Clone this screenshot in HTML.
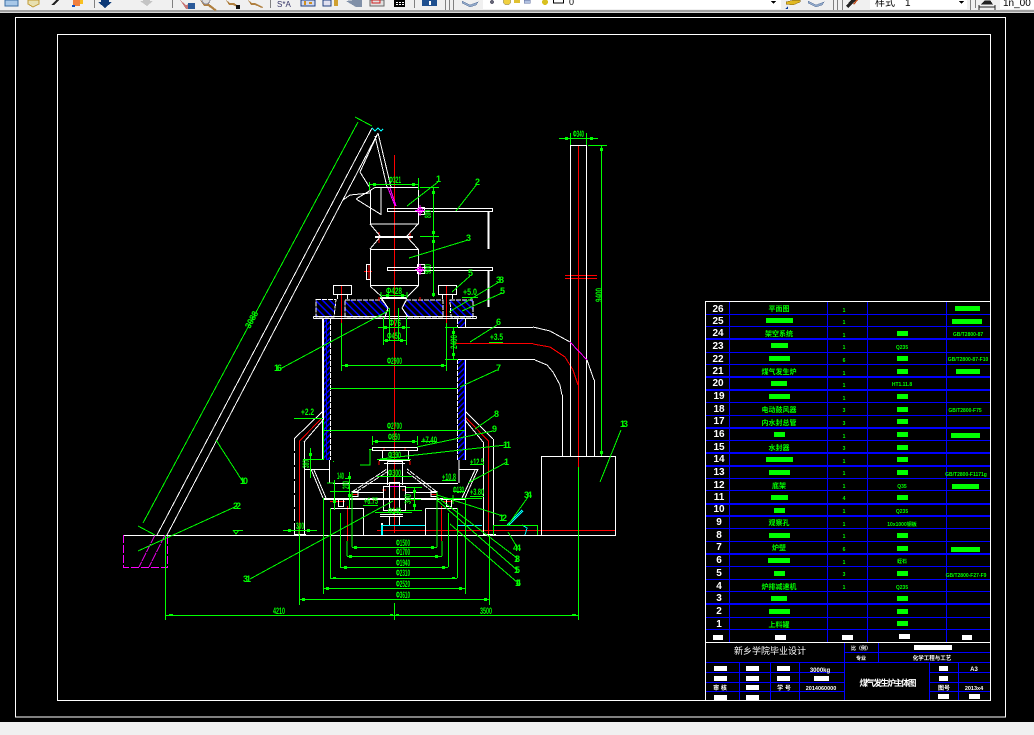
<!DOCTYPE html>
<html><head><meta charset="utf-8"><style>
html,body{margin:0;padding:0;background:#000;width:1034px;height:735px;overflow:hidden}
svg{display:block}
path,rect,circle,line{shape-rendering:crispEdges}
.d{font:bold 9px "Liberation Sans","Noto Sans CJK SC",sans-serif;fill:#0f0}
.g{font:bold 7px "Liberation Sans","Noto Sans CJK SC",sans-serif;fill:#0f0;text-anchor:middle}
.s{font:bold 5px "Liberation Sans","Noto Sans CJK SC",sans-serif;fill:#0f0;text-anchor:middle}
.n{font:bold 10px "Liberation Sans",sans-serif;fill:#fff;text-anchor:middle}
.w{font:bold 7px "Liberation Sans","Noto Sans CJK SC",sans-serif;fill:#fff;text-anchor:middle}
</style></head><body>
<svg width="1034" height="735" viewBox="0 0 1034 735" xmlns="http://www.w3.org/2000/svg">
<defs>
<pattern id="h" width="5" height="5" patternUnits="userSpaceOnUse" patternTransform="rotate(-45)"><rect width="5" height="5" fill="#000"/><rect width="1.6" height="5" fill="#00f"/></pattern>
<pattern id="h2" width="4" height="4" patternUnits="userSpaceOnUse" patternTransform="rotate(45)"><rect width="4" height="4" fill="#000"/><rect width="1.6" height="4" fill="#00f"/></pattern>
</defs>
<rect width="1034" height="735" fill="#000"/>

<!-- toolbar -->
<rect x="0" y="0" width="1034" height="10" fill="#f0f0f0"/>
<rect x="0" y="10" width="1034" height="2" fill="#a0a0a0"/>
<rect x="0" y="12" width="1034" height="1" fill="#d8d8d8"/>
<g fill="#808080">
<rect x="94" y="0" width="1" height="8"/><rect x="172" y="0" width="1" height="8"/><rect x="270" y="0" width="1" height="8"/><rect x="414" y="0" width="1" height="8"/><rect x="445" y="0" width="1" height="10"/><rect x="449" y="0" width="1" height="10"/><rect x="453" y="0" width="1" height="10"/>
<rect x="833" y="0" width="1" height="10"/><rect x="837" y="0" width="1" height="10"/><rect x="842" y="0" width="1" height="10"/><rect x="970" y="0" width="1" height="10"/><rect x="975" y="0" width="1" height="8"/>
</g>
<rect x="5" y="0" width="13" height="6" fill="#a8c8e8" stroke="#3a6ea5"/>
<path d="M28 0v4l5 3 6-3V0z" fill="#e8e0b0" stroke="#c09830"/>
<path d="M51 5l5-5h3l-5 5z" fill="#222"/>
<rect x="73" y="0" width="7" height="6" fill="#f08040"/><rect x="72" y="5" width="3" height="2" fill="#1050c0"/><rect x="80" y="0" width="3" height="4" fill="#f8c020"/>
<path d="M101 0h8v2h3l-7 6-7-6h3z" fill="#0d3a78"/>
<path d="M143 0h7v1h3l-6 5-7-5h3z" fill="#c4c4c4"/>
<path d="M180 0l6 5 3-1 5 3-3 2h-5z" fill="#c87878"/><rect x="188" y="3" width="7" height="6" fill="#2a5a9a"/>
<path d="M200 0l4 3h4l9 7-2 1-7-5h-4z" fill="#b08040"/><circle cx="206" cy="0" r="4" fill="#ddd" stroke="#889"/>
<path d="M226 0l4 3h4l6 4-1 1-6-3h-4z" fill="#b08040"/><rect x="236" y="5" width="4" height="4" fill="#111"/>
<path d="M248 0l4 3h3l8 4-1 1-7-3h-4z" fill="#b08040"/>
<text x="277" y="7" font-family="Liberation Sans" font-size="8" fill="#336">S*A</text>
<rect x="301" y="0" width="14" height="6" fill="#d0d8f0" stroke="#204080"/><rect x="304" y="1" width="2" height="4" fill="#d09020"/><rect x="309" y="2" width="3" height="2" fill="#d09020"/>
<rect x="323" y="0" width="8" height="6" fill="#e0e0f0" stroke="#204080"/><rect x="334" y="0" width="4" height="6" fill="#d0a030"/>
<path d="M346 1l8-1h8v7h-6z" fill="#8090a8"/>
<rect x="370" y="0" width="14" height="6" fill="#e0e0e0" stroke="#666"/><rect x="372" y="0" width="8" height="3" fill="none" stroke="#d02020"/>
<rect x="394" y="0" width="11" height="7" fill="#000"/><g fill="#fff"><rect x="396" y="2" width="2" height="1"/><rect x="399" y="2" width="2" height="1"/><rect x="402" y="2" width="2" height="1"/><rect x="396" y="4" width="2" height="1"/><rect x="399" y="4" width="2" height="1"/><rect x="402" y="4" width="2" height="1"/></g>
<rect x="422" y="0" width="15" height="6" fill="#1e4f8f"/><rect x="429" y="1" width="2" height="4" fill="#fff"/>
<path d="M462 1l8 4 8-3-2 3-6 2-8-4z" fill="#90a8c8" stroke="#6078a0" stroke-width=".5"/>
<rect x="483" y="0" width="298" height="9" fill="#fff"/>
<circle cx="492" cy="2" r="2" fill="#667"/><circle cx="507" cy="1" r="4" fill="#f0d040" stroke="#888" stroke-width=".5"/>
<rect x="514" y="0" width="6" height="3" fill="#e0c030"/><rect x="524" y="0" width="6" height="3" fill="#b0c0e0" stroke="#6070a0" stroke-width=".5"/>
<circle cx="545" cy="2" r="3" fill="#d8c020"/><rect x="553.500" y="-1" width="10" height="4" fill="#fff" stroke="#000"/>
<text x="569" y="5" font-family="Liberation Sans" font-size="9" fill="#000">0</text>
<path d="M771 1h5l-2.500 3z" fill="#000"/>
<path d="M786 2l8-2h6v2l-7 3-7-1z" fill="#e0b820" stroke="#806010" stroke-width=".5"/><path d="M785 9l3-3v3z" fill="#1040a0"/>
<path d="M808 1l8 4 8-3-2 3-6 2-8-4z" fill="#90a8c8" stroke="#6078a0" stroke-width=".5"/>
<path d="M851 0l-5 6 2 2 6-6 3-2z" fill="#222"/><path d="M856 0l-3 4 1 1 4-5z" fill="#c05020"/>
<rect x="870" y="0" width="97" height="9" fill="#fff"/>
<text x="875" y="6" font-family="Liberation Sans,Noto Sans CJK SC,sans-serif" font-size="10" fill="#000">样式</text>
<text x="905" y="6" font-family="Liberation Sans" font-size="10" fill="#000">1</text>
<path d="M959 1h5l-2.500 3z" fill="#000"/>
<path d="M979 7h16M979 5v5M995 5v5M982 4l3-3h5l2 3z" stroke="#222" fill="#222" stroke-width="1"/>
<rect x="1000" y="0" width="34" height="9" fill="#fff"/>
<text x="1003" y="6" font-family="Liberation Sans" font-size="10" fill="#000">1n_00</text>

<rect x="0" y="722" width="1034" height="13" fill="#f0f0f0"/>

<!-- frames -->
<g fill="none" stroke="#fff">
<rect x="15.500" y="17.500" width="990" height="699.500"/>
<rect x="57.500" y="34.500" width="933" height="666"/>
</g>

<!-- hatch areas -->
<g stroke="#fff" stroke-width="1" stroke-dasharray="5 1" fill="url(#h)">
<path d="M316 299.500H336L334 317H316Z"/>
<path d="M345 300H382L388 308L385 317H345Z"/>
<path d="M406 300H443V317H408L402 308Z"/>
<path d="M450 300H473V317H451Z"/>
</g>
<g>
<rect x="324" y="319" width="6" height="141" fill="url(#h2)"/>
<rect x="458" y="359" width="7" height="101" fill="url(#h2)"/>
<rect x="458" y="319" width="7" height="8" fill="url(#h2)"/>
<rect x="326" y="319" width="1" height="141" fill="#00f"/><rect x="464" y="359" width="1" height="101" fill="#00f"/>
</g>

<!-- red lines -->
<g fill="none" stroke="#f00" stroke-width="1">
<path d="M394.500 155V533"/>
<path d="M341.500 285V323M446.500 285V323"/>
<path d="M377 530.500H616"/>
<path d="M578.500 145V467"/>
<path d="M565 275.500H597M565 278.500H597"/>
<path d="M455 343.500H533"/>
<path d="M533 344L550 347L565 357L573 370L578 385"/>
<path d="M299.500 535V441L322 418"/>
<path d="M488.500 535V441L466 418"/>
<path d="M347.500 506V541M441.500 506V541"/>
<path d="M330 501.500H345M443 501.500H453M352 494.500H358M431 494.500H437"/>
<path d="M379 461V465M410 461V465M384 447V451M405 447V451"/>
<path d="M411 500H415M376 500H372"/>
<path d="M369 264V279M364 271.500H372"/>
<path d="M379 232V241M410 232V241M379 243V240"/>
<path d="M379 297V301M420 297V301M382 490h4M402 490h4"/>
</g>

<!-- white drawing -->
<g fill="none" stroke="#fff" stroke-width="1">
<path d="M372 128L157 535M378 133L167 535"/>
<path d="M378 133L391 187M375 136L387 187"/>
<path d="M378 133L360 172L370 188M343 200L350 195L370 193"/>
<path d="M356 199L375 187.500H418.500V224H370.500V190"/>
<path d="M356 199L381 214.500V187.500"/>
<path d="M370.500 224.500V190"/>
<path d="M370 224L380 236M418 224L407 236"/>
<path d="M375 236.500H413M375 237.500H413"/>
<path d="M380 237L370 249M407 237L418 249"/>
<path d="M370.500 249.500H418.500V285.500H370.500Z"/>
<path d="M370 286L382 297M418 286L407 297"/>
<path d="M380 297.500H407M380 298.500H407"/>
<path d="M382 299L388 308L385 317M407 299L402 308L408 317"/>
<path d="M387.500 208.500H492.500V211.500H387.500Z M387.500 267.500H492.500V270.500H387.500Z"/>
<path d="M488 212V249M489 212V249M488 271V307M489 271V307"/>
<path d="M418.500 207.500H424.500V214.500H418.500Z M417.500 264.500H424.500V273.500H417.500Z M366.500 264.500H370.500V279.500H366.500Z"/>
<path d="M333.500 285.500H351.500V294.500H333.500Z M438.500 285.500H456.500V294.500H438.500Z M337.500 295V299M347.500 295V299M442.500 295V299M452.500 295V299"/>
<path d="M313.500 316.500H476.500M313.500 318.500H476.500M313.500 316.500V318.500M476.500 316.500V318.500"/>
<path d="M323.500 319V460M322.500 319V460"/>
<path d="M330.500 319V460" stroke-dasharray="5 1"/>
<path d="M457.500 319V327M457.500 359V460" stroke-dasharray="5 1"/>
<path d="M465.500 359V460M465.500 319V327"/>
<path d="M457 327.500H533M457 359.500H535"/>
<path d="M533 327L550 331L570 342"/>
<path d="M535 360L547 365L553 372L560 385L562 395"/>
<path d="M587 360L594 380"/>
<path d="M594.500 380V456M562.500 395V456"/>
<path d="M570.500 145.500H586.500M570.500 145V456M586.500 145V456"/>
<path d="M541.500 456.500H615.500V535.500H541.500Z"/>
<path d="M123 535.500H616"/>
<path d="M294.500 535V439" stroke-dasharray="12 2"/>
<path d="M294 439L322 412M304 442L323 420"/>
<path d="M304.500 442V535"/>
<path d="M493.500 535V439"/>
<path d="M493 439L466 412M483 442L465 420"/>
<path d="M483.500 442V535"/>
<path d="M304 469.500H329M329.500 460V483M459 460V483M459 469.500H478.500M333 483.500H458"/>
<path d="M311 469L323 498M314 470L326 498M478 469L465 498M475 470L462 498"/>
<path d="M323 498.500H465M323 499.500H465"/>
<path d="M352 492L387 469M437 492L407 469M356 492L387 472M433 492L407 472" stroke-dasharray="6 1"/>
<path d="M352 492.500H383M405 492.500H437"/>
<path d="M387.500 461.500H402.500V485M387.500 461.500V485"/>
<path d="M383.500 486.500H405.500V510.500H383.500Z M389.500 482.500H399.500V509.500H389.500Z"/>
<path d="M380 516.500H403M380 514.500H403M389.500 517V525.500H399.500V517"/>
<path d="M372.500 447.500H417.500V450.500H372.500Z"/>
<path d="M382.500 450V460M408.500 450V460M379 460.500H410M384 463.500H405"/>
<path d="M330.500 508.500H363.500V535M330.500 508.500V535M425.500 508.500H457.500V535M425.500 508.500V535"/>
<path d="M338.500 498V506.500H343.500V498M446.500 498V506.500H451.500V498"/>
<path d="M352 491.500H358V496.500H352ZM431 491.500H437V496.500H431Z"/>
<path d="M294 534.500H306M484 534.500H496"/>
</g>
<rect x="381" y="523" width="2" height="12" fill="#0ff"/><rect x="381" y="523" width="2" height="2" fill="#fff"/>
<g fill="none" stroke="#0ff" stroke-width="1">
<path d="M382 525.500H425M457 525.500H482M493 525.500H522"/>
<path d="M522 525L527 528L525 535"/>
<path d="M372 128L375 131L378 128L381 131L383 129"/>
<path d="M507 525L522 510M509 525L523 511"/>
</g>
<g fill="none" stroke="#f0f" stroke-width="1">
<path d="M388 188L395 206M390 188L396 206"/>
<path d="M570 342L587 360"/>
<path d="M123.500 535V567.500H167.500V535" stroke-dasharray="8 2"/>
<path d="M155 535L139 567M165 535L149 567" stroke-dasharray="9 1"/>
<path d="M390 486.500H399"/>
<circle cx="420" cy="210.500" r="2.500"/><circle cx="420" cy="269.500" r="2.500"/>
<path d="M415 210.500H425M415 269.500H425M420 205V216M420 264V275"/>
</g>

<!-- green drawing -->
<g fill="none" stroke="#0f0" stroke-width="1">
<path d="M355 117L372 126"/>
<path d="M358 122L143 523"/>
<path d="M138 526L155 535"/>
<path d="M369.500 182V190M418.500 178V190M370 184.500H418"/>
<path d="M420 187.500H439M420 236.500H439M433.500 187V297"/>
<path d="M381 292V298M407 292V298M382 295.500H406"/>
<path d="M407 206L438 182M456 211L477 184M409 258L468 240M452 292L470 276M449 312L499 282M462 311L502 293M470 342L497 325M460 387L497 370M475 429L495 415M417 447L493 431M380 459L506 445M468 483L507 462M437 495L503 516M437 497L517 558M437 500L517 570M450 524L518 583M508 525L528 497M508 532L517 547"/>
<path d="M138 551L237 506M216 440L243 482M250 579L393 501M280 369L390 310M621 430L600 482"/>
<path d="M378 327.500H410M383 340.500H406M383.500 317V345M406.500 317V345M389.500 308V340M398.500 308V340"/>
<path d="M341.500 323V371M446.500 323V371M341 365.500H446"/>
<path d="M330 388.500H457M323 430.500H465"/>
<path d="M372.500 436V445M417.500 436V445M372 441.500H417"/>
<path d="M445 327.500H458M445 359.500H458M453.500 327V359"/>
<path d="M294 418.500H323M323.500 420V460"/>
<path d="M283 530.500H317M299 526V535"/>
<path d="M310.500 448V478M303 459.500H323M334.500 480V510M333 461.500H334M327 483H334M349.500 472V508M330 491.500H350M345 478.500H350"/>
<path d="M414.500 487V510M406 487.500H422M406 510.500H422M410 499.500H421"/>
<path d="M370 450V465H360M369 449.500H372M370 465V449"/>
<path d="M377 476.500H412M377 459.500H411M375 512.500H412"/>
<path d="M443 498.500H482M453 495V504M453 491.500H465"/>
<path d="M352 492V547M437 492V547M352 547.500H437"/>
<path d="M347 541V556M442 541V556M347 556.500H442"/>
<path d="M340.500 513V567M448.500 513V567M340 567.500H448"/>
<path d="M330.500 508V578M457.500 508V578M330 578.500H457"/>
<path d="M323.500 498V594M465.500 498V594M323 588.500H465"/>
<path d="M299.500 535V605M489.500 535V605M299 599.500H489"/>
<path d="M165.500 535V620M578.500 467V620M165 615.500H578M394.500 603V620"/>
<path d="M493.500 525.500H537.500V535M537.500 525V535M493.500 525V535"/>
<path d="M559 138.500H598M570.500 133V145M586.500 133V145"/>
<path d="M588 145.500H607M601.500 145V456"/>
<path d="M233 530.500H243M233 530L236 534L239 530"/>
<path d="M462 297.500H478"/>
<path d="M489 342.500H503"/>
<path d="M421 441.500H437"/>
<path d="M470 464.500H484M442 480.500H456M470 496.500H484M363 505.500H378"/>
</g>
<g fill="#0f0">
<rect x="373" y="183" width="3" height="3"/><rect x="412" y="183" width="3" height="3"/>
<rect x="432" y="191" width="3" height="3"/><rect x="432" y="231" width="3" height="3"/><rect x="432" y="240" width="3" height="3"/><rect x="432" y="293" width="3" height="3"/>
<rect x="386" y="294" width="3" height="3"/><rect x="401" y="294" width="3" height="3"/>
<rect x="384" y="326" width="3" height="3"/><rect x="402" y="326" width="3" height="3"/><rect x="385" y="339" width="3" height="3"/><rect x="400" y="339" width="3" height="3"/>
<rect x="345" y="364" width="3" height="3"/><rect x="441" y="364" width="3" height="3"/><rect x="452" y="331" width="3" height="3"/><rect x="452" y="353" width="3" height="3"/>
<rect x="375" y="440" width="3" height="3"/><rect x="412" y="440" width="3" height="3"/>
<rect x="309" y="453" width="3" height="3"/><rect x="348" y="476" width="3" height="3"/><rect x="333" y="500" width="3" height="3"/><rect x="348" y="494" width="3" height="3"/><rect x="413" y="490" width="3" height="3"/><rect x="413" y="504" width="3" height="3"/>
<rect x="354" y="546" width="3" height="3"/><rect x="431" y="546" width="3" height="3"/><rect x="349" y="555" width="3" height="3"/><rect x="435" y="555" width="3" height="3"/><rect x="344" y="566" width="3" height="3"/><rect x="442" y="566" width="3" height="3"/><rect x="333" y="577" width="3" height="1"/><rect x="452" y="577" width="3" height="1"/><rect x="326" y="587" width="3" height="3"/><rect x="459" y="587" width="3" height="3"/><rect x="302" y="598" width="3" height="3"/><rect x="484" y="598" width="3" height="3"/>
<rect x="169" y="614" width="4" height="1"/><rect x="572" y="614" width="4" height="1"/><rect x="390" y="614" width="3" height="1"/><rect x="396" y="614" width="3" height="1"/>
<rect x="565" y="137" width="3" height="3"/><rect x="590" y="137" width="3" height="3"/><rect x="600" y="148" width="3" height="3"/><rect x="600" y="451" width="3" height="3"/>
<rect x="288" y="529" width="3" height="3"/><rect x="307" y="529" width="3" height="3"/>
</g>
<g class="d">
<text transform="translate(250 329) rotate(-62)" textLength="18" lengthAdjust="spacingAndGlyphs">3088</text>
<text x="389" y="183" textLength="12" lengthAdjust="spacingAndGlyphs">Φ321</text>
<text x="386" y="294" textLength="16" lengthAdjust="spacingAndGlyphs">Φ428</text>
<text x="389" y="326" textLength="12" lengthAdjust="spacingAndGlyphs">Φ76</text>
<text x="387" y="339" textLength="14" lengthAdjust="spacingAndGlyphs">Φ450</text>
<text x="387" y="364" textLength="15" lengthAdjust="spacingAndGlyphs">Φ2900</text>
<text x="387" y="429" textLength="15" lengthAdjust="spacingAndGlyphs">Φ2700</text>
<text x="388" y="440" textLength="12" lengthAdjust="spacingAndGlyphs">Φ850</text>
<text x="388" y="458" textLength="13" lengthAdjust="spacingAndGlyphs">Φ390</text>
<text x="388" y="476" textLength="13" lengthAdjust="spacingAndGlyphs">Φ300</text>
<text x="388" y="514" textLength="13" lengthAdjust="spacingAndGlyphs">Φ140</text>
<text x="396" y="546" textLength="14" lengthAdjust="spacingAndGlyphs">Φ1500</text>
<text x="396" y="555" textLength="14" lengthAdjust="spacingAndGlyphs">Φ1700</text>
<text x="396" y="566" textLength="14" lengthAdjust="spacingAndGlyphs">Φ1940</text>
<text x="396" y="576" textLength="14" lengthAdjust="spacingAndGlyphs">Φ2310</text>
<text x="396" y="587" textLength="14" lengthAdjust="spacingAndGlyphs">Φ2520</text>
<text x="396" y="598" textLength="14" lengthAdjust="spacingAndGlyphs">Φ3610</text>
<text x="273" y="614" textLength="12" lengthAdjust="spacingAndGlyphs">4210</text>
<text x="480" y="614" textLength="12" lengthAdjust="spacingAndGlyphs">3500</text>
<text x="296" y="529" textLength="8" lengthAdjust="spacingAndGlyphs">300</text>
<text x="337" y="479" textLength="7" lengthAdjust="spacingAndGlyphs">140</text>
<text x="573" y="137" textLength="11" lengthAdjust="spacingAndGlyphs">Φ340</text>
<text x="463" y="295" textLength="14" lengthAdjust="spacingAndGlyphs">+5.0</text>
<text x="490" y="340" textLength="13" lengthAdjust="spacingAndGlyphs">+3.5</text>
<text x="301" y="415" textLength="13" lengthAdjust="spacingAndGlyphs">+2.2</text>
<text x="422" y="443" textLength="15" lengthAdjust="spacingAndGlyphs">+7.40</text>
<text x="470" y="465" textLength="14" lengthAdjust="spacingAndGlyphs">+12.5</text>
<text x="442" y="480" textLength="14" lengthAdjust="spacingAndGlyphs">+10.8</text>
<text x="470" y="495" textLength="14" lengthAdjust="spacingAndGlyphs">+3.80</text>
<text x="364" y="504" textLength="14" lengthAdjust="spacingAndGlyphs">+6.75</text>
<text x="453" y="493" textLength="11" lengthAdjust="spacingAndGlyphs">Φ130</text>
<text transform="translate(457 349) rotate(-90)" textLength="14" lengthAdjust="spacingAndGlyphs">2400</text>
<text transform="translate(431 218) rotate(-90)" textLength="8" lengthAdjust="spacingAndGlyphs">800</text>
<text transform="translate(431 274) rotate(-90)" textLength="10" lengthAdjust="spacingAndGlyphs">900</text>
<text transform="translate(309 468) rotate(-90)" textLength="8" lengthAdjust="spacingAndGlyphs">380</text>
<text transform="translate(349 489) rotate(-90)" textLength="8" lengthAdjust="spacingAndGlyphs">200</text>
<text transform="translate(411 504) rotate(-90)" textLength="10" lengthAdjust="spacingAndGlyphs">300</text>
<text transform="translate(602 302) rotate(-90)" textLength="14" lengthAdjust="spacingAndGlyphs">9400</text>
<text x="436" y="182">1</text><text x="475" y="185">2</text><text x="466" y="241">3</text><text x="468" y="276">5</text>
<text x="496" y="283" textLength="8">38</text><text x="500" y="294">5</text><text x="496" y="325">6</text><text x="496" y="371">7</text>
<text x="494" y="417">8</text><text x="492" y="432">9</text><text x="503" y="448" textLength="8">11</text><text x="504" y="465" textLength="6">1</text>
<text x="499" y="521" textLength="8">12</text><text x="514" y="562" textLength="6">18</text><text x="514" y="573" textLength="6">15</text>
<text x="515" y="586" textLength="6">14</text><text x="524" y="498" textLength="8">34</text><text x="513" y="551" textLength="8">44</text>
<text x="240" y="484" textLength="8">10</text><text x="233" y="509" textLength="8">22</text><text x="243" y="582" textLength="8">31</text>
<text x="274" y="371" textLength="8">16</text><text x="620" y="427" textLength="8">13</text>
</g>

<!-- table -->
<g fill="none" stroke="#00f">
<path d="M705 314.500H990M705 326.500H990M705 352.500H990M705 364.500H990M705 402.500H990M705 415.500H990M705 440.500H990M705 478.500H990M705 490.500H990M705 528.500H990M705 541.500H990M705 566.500H990M705 579.500H990M705 591.500H990M705 617.500H990M705 629.500H990"/>
<path stroke-width="2" d="M705 339H990M705 377H990M705 390H990M705 428H990M705 453H990M705 466H990M705 504H990M705 516H990M705 554H990M705 604H990"/>
<path d="M729.500 301V642M827.500 301V642M867.500 301V642M946.500 301V642"/>
<path d="M844.500 652.500H990M705 662.500H990M878.500 642V662"/>
<path d="M705 672.500H844M705 682.500H844M705 691.500H844M929 672.500H990M929 682.500H990M929 691.500H990"/>
<path d="M739.500 662V700M770.500 662V700M799.500 662V700M844.500 642V700M929.500 662V700M958.500 662V700"/>
</g>
<g stroke="#fff" fill="none">
<path d="M705.500 301.500H990.500M705.500 301V642M705 642.500H990M705.500 642V700"/>
</g>

<g class="n">
<text x="718" y="312">26</text><text x="718" y="324">25</text><text x="718" y="336">24</text><text x="718" y="349">23</text><text x="718" y="362">22</text><text x="718" y="374">21</text><text x="718" y="386">20</text><text x="719" y="399">19</text><text x="719" y="412">18</text><text x="719" y="424">17</text><text x="719" y="437">16</text><text x="719" y="450">15</text><text x="719" y="462">14</text><text x="719" y="475">13</text><text x="719" y="488">12</text><text x="719" y="500">11</text><text x="719" y="512">10</text>
<text x="719" y="525">9</text><text x="719" y="538">8</text><text x="719" y="550">7</text><text x="719" y="563">6</text><text x="719" y="576">5</text><text x="719" y="589">4</text><text x="719" y="601">3</text><text x="719" y="614">2</text><text x="719" y="627">1</text>
</g>
<g class="g">
<text x="779" y="311">平面图</text><text x="779" y="336">架空系统</text><text x="779" y="374">煤气发生炉</text><text x="779" y="412">电动鼓风器</text><text x="779" y="425">内水封总管</text><text x="779" y="450">水封器</text><text x="779" y="488">底架</text><text x="779" y="525">观察孔</text><text x="779" y="550">炉壁</text><text x="779" y="589">炉排减速机</text><text x="779" y="627">上料罐</text>
</g>
<g class="s">
<text x="844" y="312">1</text><text x="844" y="324">1</text><text x="844" y="337">1</text><text x="844" y="349">1</text><text x="844" y="362">6</text><text x="844" y="375">1</text><text x="844" y="387">1</text><text x="844" y="400">1</text><text x="844" y="412">3</text><text x="844" y="425">3</text><text x="844" y="438">1</text><text x="844" y="450">3</text><text x="844" y="463">1</text><text x="844" y="475">1</text><text x="844" y="488">1</text><text x="844" y="500">4</text><text x="844" y="513">1</text><text x="844" y="526">1</text><text x="844" y="538">1</text><text x="844" y="551">6</text><text x="844" y="564">1</text><text x="844" y="576">3</text><text x="844" y="589">1</text>
<text x="902" y="349">Q235</text><text x="902" y="386">HT1.11.8</text><text x="902" y="488">Q35</text><text x="902" y="513">Q235</text><text x="902" y="526">10x1000钢板</text><text x="902" y="563">蛭石</text><text x="902" y="589">Q235</text>
<text x="968" y="336">GB/T2800-87</text><text x="968" y="361">GB/T2800-87-F10</text><text x="965" y="412">GB/T2800-F75</text><text x="966" y="476">GB/T2800-F1171g</text><text x="966" y="577">GB/T2800-F27-F9</text>
</g>

<g fill="#0f0">
<rect x="766" y="318" width="27" height="5"/><rect x="771" y="343" width="17" height="5"/><rect x="769" y="356" width="21" height="5"/><rect x="771" y="381" width="16" height="5"/><rect x="769" y="394" width="21" height="5"/><rect x="774" y="432" width="11" height="5"/><rect x="766" y="457" width="27" height="5"/><rect x="769" y="470" width="21" height="5"/><rect x="771" y="495" width="17" height="5"/><rect x="774" y="508" width="11" height="5"/><rect x="769" y="533" width="21" height="5"/><rect x="768" y="558" width="22" height="5"/><rect x="774" y="571" width="11" height="5"/><rect x="771" y="596" width="16" height="5"/><rect x="769" y="609" width="21" height="5"/>
<rect x="897" y="331" width="11" height="5"/><rect x="897" y="356" width="11" height="5"/><rect x="897" y="369" width="11" height="5"/><rect x="897" y="394" width="11" height="5"/><rect x="897" y="407" width="11" height="5"/><rect x="897" y="419" width="11" height="5"/><rect x="897" y="432" width="11" height="5"/><rect x="897" y="445" width="11" height="5"/><rect x="897" y="457" width="11" height="5"/><rect x="897" y="470" width="11" height="5"/><rect x="897" y="495" width="11" height="5"/><rect x="897" y="533" width="11" height="5"/><rect x="897" y="546" width="11" height="5"/><rect x="897" y="571" width="11" height="5"/><rect x="897" y="596" width="11" height="5"/><rect x="897" y="609" width="11" height="5"/><rect x="897" y="621" width="11" height="5"/>
<rect x="955" y="306" width="25" height="5"/><rect x="952" y="319" width="30" height="5"/><rect x="956" y="369" width="24" height="5"/><rect x="951" y="433" width="29" height="5"/><rect x="952" y="484" width="27" height="5"/><rect x="951" y="547" width="29" height="5"/>
</g>
<g fill="#fff">
<rect x="713" y="635" width="10" height="5"/><rect x="775" y="635" width="11" height="5"/><rect x="842" y="635" width="11" height="5"/><rect x="899" y="634" width="11" height="5"/><rect x="962" y="635" width="10" height="5"/>
<rect x="914" y="645" width="38" height="5"/>
<rect x="714" y="666" width="13" height="5"/><rect x="746" y="666" width="13" height="5"/><rect x="777" y="666" width="13" height="5"/>
<rect x="714" y="676" width="13" height="5"/><rect x="746" y="676" width="13" height="5"/><rect x="777" y="676" width="13" height="5"/><rect x="814" y="676" width="15" height="5"/>
<rect x="746" y="685" width="13" height="5"/>
<rect x="714" y="695" width="13" height="5"/><rect x="746" y="695" width="13" height="5"/>
<rect x="939" y="666" width="9" height="5"/><rect x="939" y="676" width="9" height="5"/><rect x="938" y="694" width="11" height="5"/><rect x="969" y="694" width="11" height="5"/>
</g>
<g>
<text x="770" y="654" font-family="Liberation Sans,Noto Sans CJK SC,sans-serif" font-size="9" fill="#fff" text-anchor="middle" textLength="72" lengthAdjust="spacing">新乡学院毕业设计</text>
<text x="888" y="686" font-family="Liberation Sans,Noto Sans CJK SC,sans-serif" font-size="8.500" font-weight="bold" fill="#fff" text-anchor="middle" textLength="57" lengthAdjust="spacing">煤气发生炉主体图</text>
</g>
<g class="w">
<text x="861" y="650" style="font-size:5px">比（例）</text>
<text x="861" y="660" style="font-size:5px">专业</text>
<text x="932" y="660" style="font-size:5.500px">化学工程与工艺</text>
<text x="820" y="672" style="font-size:6px">3000kg</text>
<text x="720" y="690" style="font-size:6px">审 核</text>
<text x="784" y="690" style="font-size:6px">学 号</text>
<text x="821" y="690" style="font-size:5.500px">2014060000</text>
<text x="974" y="671" style="font-size:6px">A3</text>
<text x="944" y="690" style="font-size:6px">图号</text>
<text x="974" y="690" style="font-size:5.500px">2013x4</text>
</g>
</svg>
</body></html>
